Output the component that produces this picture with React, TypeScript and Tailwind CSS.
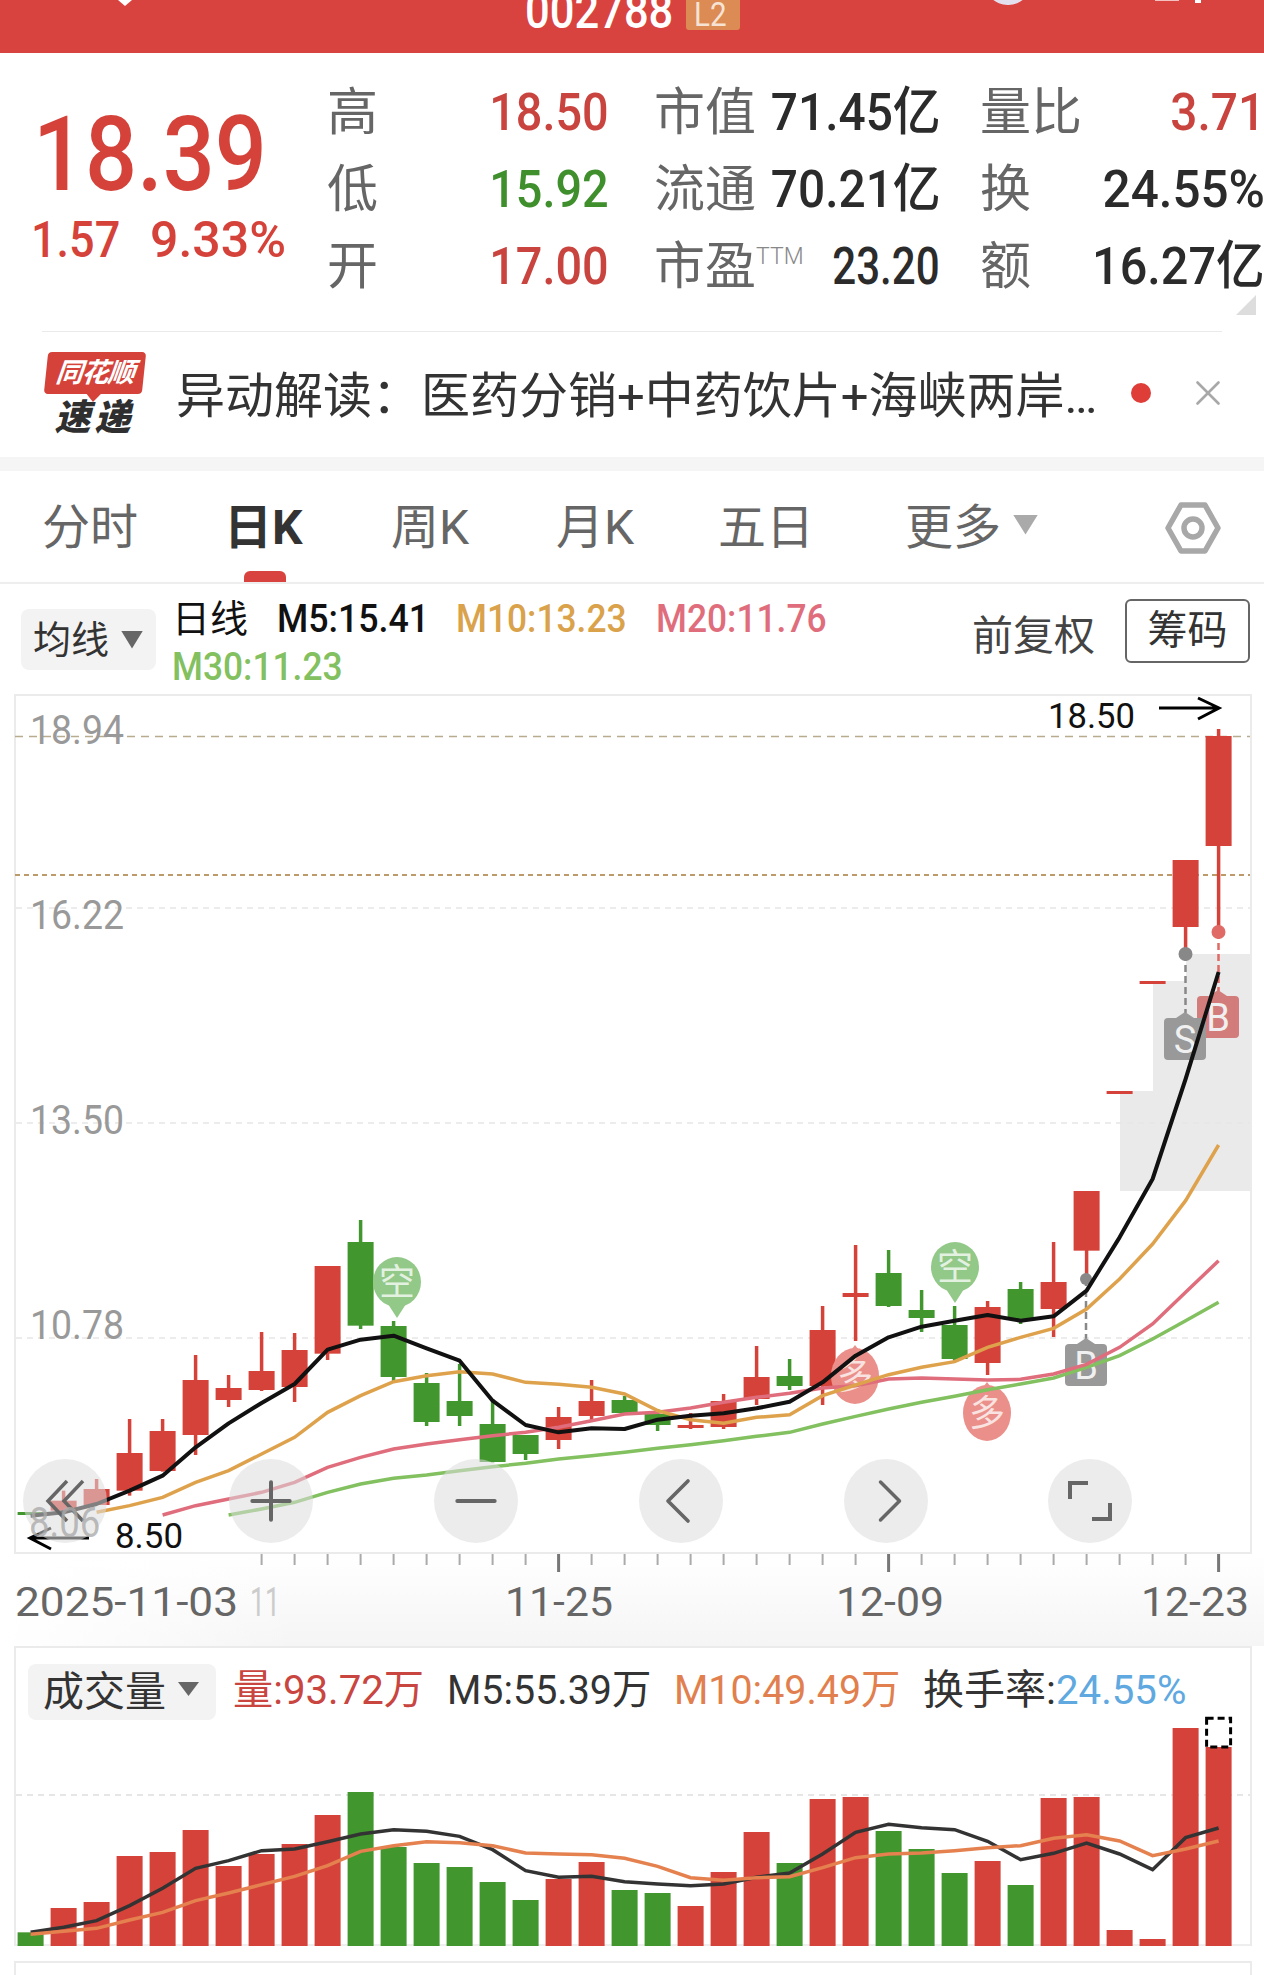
import React from "react";
import { ChevronLeft, ChevronRight, Minus, Plus, X } from "lucide-react";

const RED = "#d5423a";
const GREEN = "#42962e";
const sans = "font-['Roboto','Noto_Sans_CJK_SC',sans-serif]";

const cx = (i: number) => 30.6 + 33 * i;
// chart crops were read at 3x, so candle rows are stored as crop y
const py = (d: number) => 1180 + d / 3;
const vy = (d: number) => 1620 + d / 3;

type Candle = [number, number, number, number, "r" | "g"];

const candles: Candle[] = [
  [999, 999, 1003, 1003, "g"],
  [935, 965, 995, 1005, "r"],
  [900, 930, 978, 978, "r"],
  [720, 822, 935, 950, "r"],
  [720, 756, 876, 878, "r"],
  [528, 603, 768, 828, "r"],
  [588, 627, 663, 684, "r"],
  [459, 576, 633, 636, "r"],
  [462, 513, 624, 669, "r"],
  [261, 261, 524, 543, "r"],
  [123, 189, 440, 450, "g"],
  [426, 441, 594, 606, "g"],
  [582, 612, 729, 741, "g"],
  [555, 666, 711, 741, "g"],
  [660, 735, 849, 850, "g"],
  [768, 768, 825, 843, "g"],
  [684, 714, 783, 810, "r"],
  [603, 666, 711, 723, "r"],
  [651, 663, 702, 708, "g"],
  [690, 705, 738, 756, "g"],
  [702, 738, 744, 750, "r"],
  [645, 666, 744, 750, "r"],
  [501, 594, 660, 678, "r"],
  [540, 591, 621, 633, "g"],
  [381, 453, 621, 678, "r"],
  [198, 342, 354, 486, "r"],
  [213, 282, 381, 384, "g"],
  [333, 393, 417, 459, "g"],
  [381, 438, 540, 545, "g"],
  [366, 384, 552, 588, "r"],
  [309, 330, 423, 435, "g"],
  [189, 309, 390, 474, "r"],
  [36, 36, 215, 300, "r"],
  [-264, -264, -258, -258, "r"],
  [-594, -594, -588, -588, "r"],
  [-957, -957, -756, -675, "r"],
  [-1350, -1329, -999, -741, "r"],
];

const ma5 = [1010, 1000, 975, 935, 890, 805, 733, 672, 615, 512, 482, 470, 508, 545, 665, 738, 760, 748, 750, 722, 710, 703, 688, 668, 610, 530, 475, 443, 425, 408, 425, 412, 335, 175, 0, -300, -621];
const ma10 = [0, 0, 1000, 980, 955, 910, 875, 825, 775, 700, 650, 608, 590, 578, 585, 610, 616, 625, 645, 695, 722, 733, 715, 707, 650, 618, 587, 565, 548, 505, 475, 448, 390, 300, 195, 65, -102];
const ma20 = [0, 0, 0, 0, 1008, 980, 960, 940, 910, 865, 835, 810, 795, 782, 770, 760, 745, 725, 705, 700, 687, 670, 655, 643, 627, 620, 600, 597, 600, 603, 601, 585, 556, 505, 435, 340, 245];
const ma30 = [0, 0, 0, 0, 0, 0, 1008, 990, 970, 940, 915, 898, 888, 875, 863, 853, 840, 830, 820, 808, 797, 785, 772, 760, 735, 712, 690, 670, 652, 632, 615, 597, 565, 530, 480, 425, 370];

const volumes = [940, 867, 849, 711, 699, 633, 741, 705, 675, 588, 519, 684, 732, 744, 789, 843, 780, 729, 813, 822, 861, 759, 639, 732, 540, 534, 636, 690, 762, 726, 798, 537, 534, 933, 960, 327, 384];
const volumeColors = "grrrrrrrrrggggggrrggrrrgrrgggrgrrrrrr";
const volMa5 = [940, 925, 905, 860, 808, 748, 725, 695, 690, 668, 645, 632, 637, 652, 692, 755, 775, 772, 788, 795, 800, 795, 775, 762, 705, 640, 616, 626, 632, 667, 722, 703, 672, 705, 752, 656, 627];
const volMa10 = [946, 937, 928, 903, 880, 845, 822, 797, 772, 740, 697, 680, 668, 671, 680, 702, 705, 707, 718, 742, 776, 784, 776, 773, 746, 716, 705, 702, 695, 686, 680, 658, 647, 666, 710, 690, 666];

function line(values: number[], toY: (d: number) => number) {
  return values
    .map((d, i) => (d === 0 && i < 8 ? null : `${cx(i)},${toY(d)}`))
    .filter(Boolean)
    .join(" ");
}

function Num({
  children,
  className = "",
  right = false,
  fit = "scale-x-[.87]",
}: {
  children: React.ReactNode;
  className?: string;
  right?: boolean;
  fit?: string;
}) {
  return (
    <span className={`inline-block whitespace-nowrap ${fit} ${right ? "origin-right" : "origin-left"} ${className}`}>
      {children}
    </span>
  );
}

function QuoteCell({
  label,
  value,
  color,
  sup,
  fit = "scale-x-[.92]",
}: {
  label: string;
  value: string;
  color: string;
  sup?: boolean;
  fit?: string;
}) {
  return (
    <div className="flex items-center justify-between h-[77px]">
      <span className="text-[51px] leading-none text-[#666] whitespace-nowrap">
        {label}
        {sup && <span className="text-[23px] align-[20px] font-light text-[#888]">TTM</span>}
      </span>
      <Num right fit={fit} className={`text-[52px] leading-none font-medium ${color}`}>
        {value}
      </Num>
    </div>
  );
}

function Bubble({ x, tip, text, fill, down }: { x: number; tip: number; text: string; fill: string; down?: boolean }) {
  // tip is the pointed end: down markers point at the candle below them
  const c = down ? tip - 36 : tip + 31;
  const ry = down ? 25 : 28;
  return (
    <g>
      <ellipse cx={x} cy={c} rx={24} ry={ry} fill={fill} />
      <polygon points={`${x - 9},${down ? tip - 14 : tip + 12} ${x + 9},${down ? tip - 14 : tip + 12} ${x},${tip}`} fill={fill} />
      <text x={x} y={c + 13} textAnchor="middle" fontSize="36" fill="#fff" opacity=".75" fontFamily="'Noto Sans CJK SC',sans-serif">
        {text}
      </text>
    </g>
  );
}

function Tag({ x, top, text, fill }: { x: number; top: number; text: string; fill: string }) {
  return (
    <g>
      <polygon points={`${x},${top} ${x + 9},${top + 6} ${x - 9},${top + 6}`} fill={fill} />
      <rect x={x - 21} y={top + 6} width={42} height={42} rx={4} fill={fill} />
      <text x={x} y={top + 41} textAnchor="middle" fontSize="38" fill="#f0f0f0" fontFamily="Roboto,sans-serif">
        {text}
      </text>
    </g>
  );
}

function MainChart() {
  const grid = [909, 1124, 1339];
  const labels: [string, number][] = [
    ["18.94", 745],
    ["16.22", 930],
    ["13.50", 1135],
    ["10.78", 1340],
  ];
  return (
    <svg viewBox="0 695 1264 860" className="absolute inset-0 w-[1264px] h-[860px]">
      {/* highlighted price steps at the right end */}
      <path d="M1120 1192V1092H1153V982H1186V955H1250V1192Z" fill="#eaeaea" />
      {grid.map((y) => (
        <line key={y} x1="16" x2="1250" y1={y} y2={y} stroke="#e6e6e6" strokeWidth="1.5" strokeDasharray="6 5" />
      ))}
      <line x1="15" x2="1250" y1="737.5" y2="737.5" stroke="#b8ab8e" strokeWidth="1.5" strokeDasharray="8 6" />
      <line x1="15" x2="1250" y1="876" y2="876" stroke="#bd9a6a" strokeWidth="2" strokeDasharray="5 4" />
      {labels.map(([t, y]) => (
        <text key={t} x="30" y={y} fontSize="40" fill="#999" textLength="94" lengthAdjust="spacingAndGlyphs" fontFamily="Roboto,sans-serif">
          {t}
        </text>
      ))}

      {candles.map(([wt, bt, bb, wb, c], i) => {
        const color = c === "r" ? RED : GREEN;
        const x = cx(i);
        return (
          <g key={i}>
            <line x1={x} x2={x} y1={py(wt)} y2={py(wb)} stroke={color} strokeWidth="3.5" />
            <rect x={x - 13} y={py(bt)} width="26" height={Math.max(py(bb) - py(bt), 3)} fill={color} />
          </g>
        );
      })}

      <Bubble x={397} tip={1319} text="空" fill="#92c888" down />
      <Bubble x={955} tip={1304} text="空" fill="#92c888" down />
      <Bubble x={855} tip={1346} text="多" fill="#ea8f8a" />
      <Bubble x={987} tip={1383} text="多" fill="#ea8f8a" />

      {/* trade marks: B/S flags with dashed leaders */}
      <line x1="1086" x2="1086" y1="1280" y2="1340" stroke="#888" strokeWidth="2.5" strokeDasharray="7 4" />
      <circle cx="1086" cy="1280" r="6" fill="#888" />
      <line x1="1185.5" x2="1185.5" y1="955" y2="1014" stroke="#888" strokeWidth="2.5" strokeDasharray="7 4" />
      <circle cx="1185.5" cy="955" r="7" fill="#888" />
      <line x1="1218.5" x2="1218.5" y1="933" y2="992" stroke="#e06a66" strokeWidth="2.5" strokeDasharray="7 4" />
      <circle cx="1218.5" cy="933" r="7" fill="#e06a66" />
      <Tag x={1086} top={1339} text="B" fill="#999" />
      <Tag x={1218} top={991} text="B" fill="#d27c7b" />
      <Tag x={1185} top={1013} text="S" fill="#999" />

      <polyline points={line(ma30, py)} fill="none" stroke="#82c060" strokeWidth="3.5" />
      <polyline points={line(ma20, py)} fill="none" stroke="#df6d7c" strokeWidth="3.5" />
      <polyline points={line(ma10, py)} fill="none" stroke="#dfa24c" strokeWidth="3.5" />
      <polyline points={line(ma5, py)} fill="none" stroke="#111" strokeWidth="4" strokeLinejoin="round" />

      <text x="1048" y="729" fontSize="35" fill="#111" textLength="87" lengthAdjust="spacingAndGlyphs" fontFamily="Roboto,sans-serif">
        18.50
      </text>
      <path d="M1159 709H1218M1198 699L1219 709L1198 720" fill="none" stroke="#000" strokeWidth="3" />
      <text x="115" y="1549" fontSize="35" fill="#111" textLength="68" lengthAdjust="spacingAndGlyphs" fontFamily="Roboto,sans-serif">
        8.50
      </text>
      <path d="M89 1539H31M51 1529L30 1539L51 1550" fill="none" stroke="#000" strokeWidth="3" />
    </svg>
  );
}

function ChartButton({ left, children }: { left: number; children: React.ReactNode }) {
  return (
    <div
      className="absolute top-[765px] w-[84px] h-[84px] rounded-full bg-[#dcdcdc]/55 flex items-center justify-center text-[#666]"
      style={{ left: left - 42 }}
    >
      {children}
    </div>
  );
}

function Axis() {
  const minor = candles.map((_, i) => i).filter((i) => i >= 7);
  return (
    <div className="relative h-[92px] bg-gradient-to-b from-white to-[#f5f5f5]">
      <div className="absolute inset-y-0 left-0 w-[300px] bg-gradient-to-r from-white to-transparent" />
      <svg viewBox="0 1555 1264 92" className="absolute inset-0 w-[1264px] h-[92px]">
        {minor.map((i) => {
          const major = i === 16 || i === 26 || i === 36;
          return (
            <line key={i} x1={cx(i)} x2={cx(i)} y1="1555" y2={major ? 1573 : 1566} stroke={major ? "#777" : "#aaa"} strokeWidth={major ? 3 : 2} />
          );
        })}
        <g fontSize="41" fill="#666" fontFamily="Roboto,sans-serif">
          <text x="15" y="1617" textLength="223" lengthAdjust="spacingAndGlyphs">2025-11-03</text>
          <text x="250" y="1617" textLength="30" lengthAdjust="spacingAndGlyphs" fill="#ccc">11</text>
          <text x="505" y="1617" textLength="108" lengthAdjust="spacingAndGlyphs">11-25</text>
          <text x="836" y="1617" textLength="108" lengthAdjust="spacingAndGlyphs">12-09</text>
          <text x="1141" y="1617" textLength="108" lengthAdjust="spacingAndGlyphs">12-23</text>
        </g>
      </svg>
    </div>
  );
}

function VolumeBars() {
  return (
    <svg viewBox="0 1715 1264 232" className="w-[1264px] h-[232px] block">
      <line x1="16" x2="1250" y1="1796" y2="1796" stroke="#dedede" strokeWidth="1.5" strokeDasharray="6 5" />
      <line x1="16" x2="1250" y1="1946" y2="1946" stroke="#eeeeee" strokeWidth="2" />
      {volumes.map((d, i) => (
        <rect key={i} x={cx(i) - 13} y={vy(d)} width="26" height={1947 - vy(d)} fill={volumeColors[i] === "r" ? RED : GREEN} />
      ))}
      <rect x={cx(36) - 12} y={vy(298)} width="24" height={(384 - 298) / 3} fill="none" stroke="#000" strokeWidth="3" strokeDasharray="7 4" />
      <polyline points={line(volMa5, vy)} fill="none" stroke="#333" strokeWidth="3.5" />
      <polyline points={line(volMa10, vy)} fill="none" stroke="#e5814f" strokeWidth="3.5" />
    </svg>
  );
}

export default function App() {
  return (
    <div className={`w-[1264px] h-[1975px] overflow-hidden bg-white flex flex-col ${sans}`}>
      {/* title bar, the status area is cut off by the crop */}
      <div className="relative h-[53px] shrink-0 bg-[#d9433f] overflow-hidden flex items-end justify-center gap-[14px] pb-[24px]">
        <span className="w-[147px] h-[36px] text-[50px] leading-[36px] font-medium text-white">
          <Num>002788</Num>
        </span>
        <span className="w-[54px] h-[30px] -mb-[1px] pt-[3px] bg-[#dc8b55] rounded-b-[3px] text-[34px] leading-[22px] text-[#f7e3d4] text-center">
          <Num>L2</Num>
        </span>
        <span className="absolute left-[118px] top-0 w-[14px] h-[6px] bg-white [clip-path:polygon(0_0,100%_0,50%_100%)]" />
        <span className="absolute left-[985px] top-[-40px] w-[46px] h-[45px] rounded-full bg-[#e4dfee]" />
        <span className="absolute left-[1155px] top-0 w-[24px] h-[1px] bg-[#f5c0c0]" />
        <span className="absolute left-[1195px] top-0 w-[6px] h-[3px] bg-white" />
      </div>

      {/* quote */}
      <div className="relative h-[279px] shrink-0">
        <div className="flex pt-[20px]">
          <div className="w-[327px] shrink-0 pl-[33px] pt-[27px]">
            <div className="h-[110px] text-[103px] leading-[110px] font-medium text-[#d5423a]">
              <Num fit="scale-x-[.89]">18.39</Num>
            </div>
            <div className="-ml-[2px] mt-[5px] flex gap-[32px] text-[50px] leading-[50px] font-medium text-[#d5423a]">
              <span className="w-[87px]"><Num fit="scale-x-[.9]">1.57</Num></span>
              <Num fit="scale-x-[1]">9.33%</Num>
            </div>
          </div>
          <div className="grid grid-cols-[282px_281px_285px] gap-x-[45px] pt-[1px]">
            <QuoteCell label="高" value="18.50" fit="scale-x-[.9]" color="text-[#c9443e]" />
            <QuoteCell label="市值" value="71.45亿" color="text-[#2b2b2b]" />
            <QuoteCell label="量比" value="3.71" color="text-[#c9443e]" />
            <QuoteCell label="低" value="15.92" fit="scale-x-[.9]" color="text-[#3f8f2d]" />
            <QuoteCell label="流通" value="70.21亿" color="text-[#2b2b2b]" />
            <QuoteCell label="换" value="24.55%" fit="scale-x-[.95]" color="text-[#2b2b2b]" />
            <QuoteCell label="开" value="17.00" fit="scale-x-[.9]" color="text-[#c9443e]" />
            <QuoteCell label="市盈" sup value="23.20" fit="scale-x-[.81]" color="text-[#2b2b2b] translate-x-[3px]" />
            <QuoteCell label="额" value="16.27亿" fit="scale-x-[.935]" color="text-[#2b2b2b]" />
          </div>
        </div>
        <span className="absolute right-[8px] bottom-[17px] w-[20px] h-[20px] bg-[#dddddd] [clip-path:polygon(100%_0,100%_100%,0_100%)]" />
        <div className="absolute left-[42px] right-[42px] bottom-0 h-[1px] bg-[#eaeaea]" />
      </div>

      {/* news ticker */}
      <div className="h-[125px] shrink-0 flex items-center">
        <div className="ml-[44px] w-[101px] h-[88px] mt-[2px] shrink-0 flex flex-col items-center">
          <div className="relative w-[98px] h-[42px] bg-[#d5423a] rounded-[4px] -skew-x-6 flex items-center justify-center">
            <span className="text-[27px] leading-none font-bold italic text-white tracking-[-1px] whitespace-nowrap">同花顺</span>
            <span className="absolute left-[42px] -bottom-[8px] w-[16px] h-[9px] bg-[#d5423a] [clip-path:polygon(0_0,100%_0,50%_100%)]" />
          </div>
          <span className="mt-[5px] text-[36px] leading-[38px] font-black italic text-[#2f2f2f] whitespace-nowrap tracking-[4px]">速递</span>
        </div>
        <div className="ml-[31px] w-[924px] text-[49px] leading-none mt-[3px] text-[#333] whitespace-nowrap">异动解读：医药分销+中药饮片+海峡两岸…</div>
        <span className="ml-[31px] w-[20px] h-[20px] shrink-0 rounded-full bg-[#de3d38] -mt-[4px]" />
        <X className="ml-[36px] w-[42px] h-[42px] shrink-0 text-[#a8a8a8] -mt-[4px]" strokeWidth={1.5} />
      </div>
      <div className="h-[14px] shrink-0 bg-[#f5f5f5]" />

      {/* period tabs */}
      <div className="relative h-[113px] shrink-0 border-b-2 border-[#eeeeee] text-[48px] leading-none text-[#666]">
        <div className="flex h-[111px] items-center pl-[42px] pt-[2px]">
          <span className="w-[182px]">分时</span>
          <span className="w-[167px] font-bold text-[#333]">日K</span>
          <span className="w-[165px]">周K</span>
          <span className="w-[162px]">月K</span>
          <span className="w-[187px]">五日</span>
          <span className="w-[108px]">更多</span>
          <span className="w-[25px] h-[20px] bg-[#aaaaaa] [clip-path:polygon(0_0,100%_0,50%_100%)] -mt-[6px]" />
          <svg viewBox="0 0 56 56" className="ml-[127px] w-[56px] h-[56px]" fill="none" stroke="#a8a8a8" strokeWidth="5.5">
            <path d="M16 5H40L53 28L40 51H16L3 28Z" strokeLinejoin="round" />
            <circle cx="28" cy="28" r="9" />
          </svg>
        </div>
        <span className="absolute left-[244px] bottom-0 w-[42px] h-[11px] bg-[#d9433f] rounded-t-[6px]" />
      </div>

      {/* moving average legend */}
      <div className="relative h-[110px] shrink-0 flex">
        <div className="ml-[21px] mt-[25px] w-[135px] h-[61px] shrink-0 rounded-lg bg-[#f3f3f3] flex items-center pl-[12px] text-[38px] leading-none text-[#333]">
          均线
          <span className="ml-[12px] w-[22px] h-[18px] bg-[#666] [clip-path:polygon(0_0,100%_0,50%_100%)]" />
        </div>
        <div className="ml-[16px] mt-[11px] text-[38px] leading-[48px] whitespace-nowrap">
          <div className="flex text-[#111]">
            <span className="w-[105px]">日线</span>
            <span className="w-[179px]"><Num fit="scale-x-[.94]" className="font-medium">M5:15.41</Num></span>
            <span className="w-[200px] text-[#d9a24b]"><Num fit="scale-x-[.93]" className="font-medium">M10:13.23</Num></span>
            <span className="text-[#df6d7c]"><Num fit="scale-x-[.93]" className="font-medium">M20:11.76</Num></span>
          </div>
          <div className="text-[#82c060]"><Num fit="scale-x-[.93]" className="font-medium">M30:11.23</Num></div>
        </div>
        <span className="absolute left-[972px] top-[29px] text-[41px] leading-[46px] text-[#444]">前复权</span>
        <span className="absolute left-[1125px] top-[15px] w-[125px] h-[64px] rounded-md border-2 border-[#666] flex items-center justify-center text-[40px] leading-none text-[#333]">筹码</span>
      </div>

      {/* candles */}
      <div className="relative h-[860px] shrink-0 mx-0">
        <div className="absolute left-[14px] top-0 w-[1238px] h-[860px] border-2 border-[#ebebeb]" />
        <MainChart />
        <ChartButton left={65}>
          <svg viewBox="0 0 40 44" className="w-[40px] h-[44px]" fill="none" stroke="currentColor" strokeWidth="3.5">
            <path d="M22 2L3 22L22 42M38 2L19 22L38 42" />
          </svg>
        </ChartButton>
        <ChartButton left={271}><Plus size={64} strokeWidth={1.5} /></ChartButton>
        <ChartButton left={476}><Minus size={64} strokeWidth={1.5} /></ChartButton>
        <ChartButton left={681}><ChevronLeft size={80} strokeWidth={1.1} className="-ml-[6px]" /></ChartButton>
        <ChartButton left={886}><ChevronRight size={80} strokeWidth={1.1} className="ml-[8px]" /></ChartButton>
        <ChartButton left={1090}>
          <svg viewBox="0 0 44 44" className="w-[44px] h-[44px]" fill="none" stroke="currentColor" strokeWidth="4">
            <path d="M2 20V4H20M24 40H42V24" />
          </svg>
        </ChartButton>
        <span className="absolute left-[29px] top-[808px] scale-x-[.87] origin-left text-[42px] leading-none text-[#aaa]/80">8.06</span>
      </div>
      <Axis />

      {/* volume panel */}
      <div className="relative h-[300px] shrink-0 mx-[14px] w-[1238px] border-x-2 border-t-2 border-[#ebebeb]">
        <div className="flex items-center h-[72px] pl-[12px] pt-[12px] text-[41px] leading-none whitespace-nowrap">
          <div className="w-[188px] h-[56px] mt-[4px] rounded-lg bg-[#f3f3f3] flex items-center pl-[15px] text-[#333]">
            成交量
            <span className="ml-[12px] w-[21px] h-[14px] bg-[#666] [clip-path:polygon(0_0,100%_0,50%_100%)] -mt-[6px]" />
          </div>
          <span className="ml-[17px] w-[214px] text-[#c9453f]"><Num fit="scale-x-[.98]">量:93.72万</Num></span>
          <span className="w-[227px] text-[#333]"><Num fit="scale-x-[.96]">M5:55.39万</Num></span>
          <span className="w-[249px] text-[#e27f4e]"><Num fit="scale-x-[.96]">M10:49.49万</Num></span>
          <span className="text-[#333]">换手率:</span>
          <span className="text-[#60a9e0]"><Num fit="scale-x-[.98]">24.55%</Num></span>
        </div>
        <div className="absolute -left-[16px] bottom-0">
          <VolumeBars />
        </div>
      </div>

      <div className="mt-[15px] mx-[14px] w-[1238px] flex-1 border-x-2 border-t-2 border-[#ebebeb]" />
    </div>
  );
}
